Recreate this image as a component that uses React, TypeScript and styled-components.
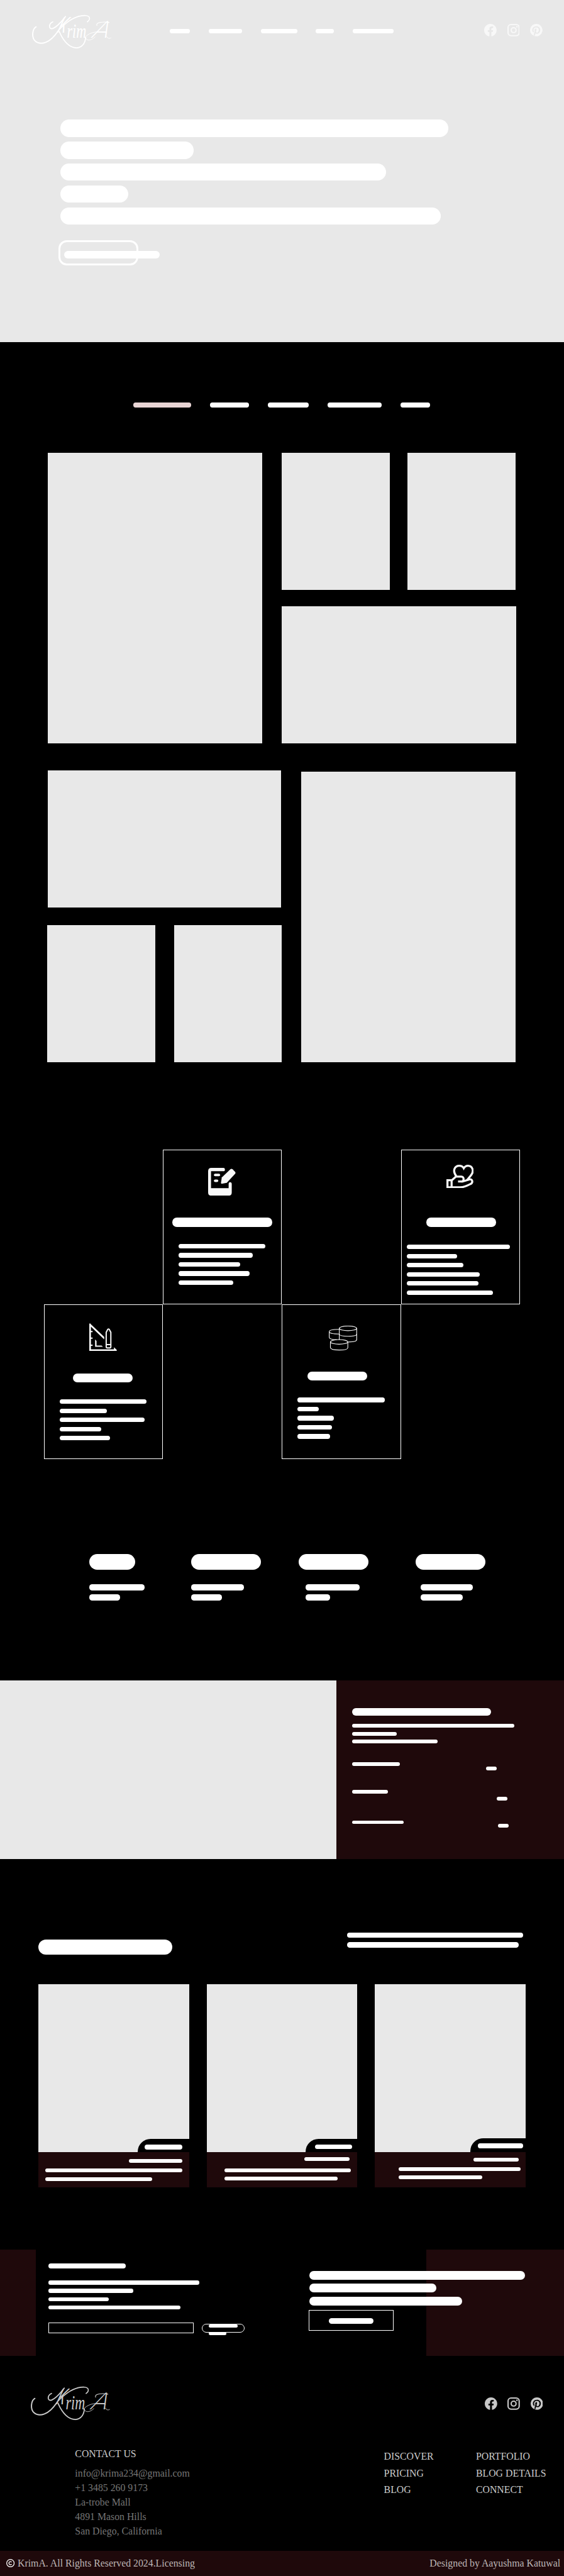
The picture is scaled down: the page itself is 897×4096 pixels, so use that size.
import React from "react";
import styled, { createGlobalStyle } from "styled-components";
import { BsFacebook, BsPinterest } from "react-icons/bs";

/* Design units are based on a 1360 wide artboard. */
const u = (n: number) => `${+(n * 0.6594).toFixed(3)}px`;

const tile = "#e8e8e8";
const maroon = "#1f090b";

const GlobalStyle = createGlobalStyle`
  * { box-sizing: border-box; }
  html, body { margin: 0; padding: 0; background: #000; }
  body { font-family: "Liberation Serif", "Times New Roman", serif; overflow-x: hidden; }
`;

const Page = styled.div`
  width: 100%;
  height: ${u(6211.6)};
  overflow: hidden;
  background: #000;
`;

const Bar = styled.div<{ $w: number; $h: number; $mt?: number; $ml?: number; $tone?: string }>`
  flex: none;
  width: ${(p) => u(p.$w)};
  height: ${(p) => u(p.$h)};
  margin-top: ${(p) => u(p.$mt ?? 0)};
  margin-left: ${(p) => u(p.$ml ?? 0)};
  border-radius: ${(p) => u(p.$h / 2)};
  background: ${(p) => p.$tone ?? "#fff"};
`;

const LineStack = styled.div<{ $gap: number; $mt?: number; $ml?: number }>`
  display: flex;
  flex-direction: column;
  gap: ${(p) => u(p.$gap)};
  margin-top: ${(p) => u(p.$mt ?? 0)};
  margin-left: ${(p) => u(p.$ml ?? 0)};
`;

function Lines(p: { widths: number[]; h: number; gap: number; mt?: number; ml?: number }) {
  return (
    <LineStack $gap={p.gap} $mt={p.mt} $ml={p.ml}>
      {p.widths.map((w, i) => (
        <Bar key={i} $w={w} $h={p.h} />
      ))}
    </LineStack>
  );
}

const BarRow = styled.nav<{ $ml: number }>`
  display: flex;
  gap: ${u(45)};
  margin-left: ${(p) => u(p.$ml)};
`;

/* ---------- brand ---------- */

const LogoSvg = styled.svg<{ $tone: string }>`
  display: block;
  flex: none;
  width: ${u(240)};
  height: ${u(110)};
  color: ${(p) => p.$tone};
`;

function Logo({ tone }: { tone: string }) {
  return (
    <LogoSvg $tone={tone} viewBox="0 0 720 330" role="img" aria-label="KrimA">
      <g fill="none" stroke="currentColor" strokeLinecap="round">
        <path strokeWidth="9" d="M79 135C50 152 46 214 73 238C112 272 180 252 236 168" />
        <path strokeWidth="8" d="M200 99C168 114 168 158 202 146C240 130 268 90 292 60" />
        <path strokeWidth="7" d="M238 164C300 96 372 50 438 53C474 56 472 84 450 99" />
        <path strokeWidth="8" d="M246 168C276 236 318 288 374 287C414 284 436 250 437 212" />
        <path strokeWidth="5" d="M519 126C508 100 570 96 608 104" />
        <path strokeWidth="4" d="M590 178C540 160 470 172 438 205C436 240 478 238 506 208" />
        <path strokeWidth="4" d="M590 205C598 222 612 220 620 215" />
      </g>
      <g fill="currentColor">
        <text
          transform="translate(226 176) skewX(-20)"
          fontFamily="Inter"
          fontStyle="italic"
          fontWeight="400"
          fontSize="156"
          textLength="62"
          lengthAdjust="spacingAndGlyphs"
        >
          K
        </text>
        <text
          x="302"
          y="212"
          fontFamily="Liberation Serif"
          fontStyle="italic"
          fontSize="142"
          textLength="140"
          lengthAdjust="spacingAndGlyphs"
        >
          rim
        </text>
        <text
          transform="translate(478 216) skewX(-20)"
          fontFamily="Inter"
          fontStyle="italic"
          fontWeight="200"
          fontSize="166"
          textLength="122"
          lengthAdjust="spacingAndGlyphs"
        >
          A
        </text>
      </g>
    </LogoSvg>
  );
}

const SocialRow = styled.div<{ $tone: string; $mt?: number; $mb?: number }>`
  display: flex;
  gap: ${u(25)};
  margin-left: auto;
  margin-top: ${(p) => u(p.$mt ?? 0)};
  margin-bottom: ${(p) => u(p.$mb ?? 0)};
  color: ${(p) => p.$tone};
  svg { display: block; width: ${u(30)}; height: ${u(30)}; }
`;

function InstagramIcon() {
  return (
    <svg viewBox="0 0 30 30" fill="none" stroke="currentColor" strokeWidth="3.2">
      <rect x="1.6" y="1.6" width="26.8" height="26.8" rx="7" />
      <circle cx="15" cy="15" r="5.9" />
      <circle cx="23" cy="7" r="2" fill="currentColor" stroke="none" />
    </svg>
  );
}

function SocialIcons() {
  return (
    <>
      <BsFacebook />
      <InstagramIcon />
      <BsPinterest />
    </>
  );
}

/* ---------- hero ---------- */

const Hero = styled.section`
  height: ${u(825.5)};
  background: ${tile};
`;

const Header = styled.header<{ $top: number; $left: number; $right: number }>`
  display: flex;
  align-items: center;
  padding: ${(p) => `${u(p.$top)} ${u(p.$right)} 0 ${u(p.$left)}`};
`;

const HeroButton = styled.div`
  display: flex;
  align-items: center;
  width: ${u(192)};
  height: ${u(60)};
  margin: ${u(38)} 0 0 ${u(141)};
  padding: ${u(8)} 0 0 ${u(9)};
  border: 3px solid #fff;
  border-radius: ${u(20)};
`;

/* ---------- gallery ---------- */

const Portfolio = styled.section`
  padding-top: ${u(145.5)};
`;

const Mosaic = styled.div<{ $gap: number; $mt: number; $ml: number }>`
  display: flex;
  gap: ${(p) => u(p.$gap)};
  margin: ${(p) => `${u(p.$mt)} 0 0 ${u(p.$ml)}`};
`;

const MosaicColumn = styled.div<{ $gap: number }>`
  display: flex;
  flex-direction: column;
  flex: none;
  gap: ${(p) => u(p.$gap)};
`;

const MosaicRow = styled.div<{ $gap: number }>`
  display: flex;
  gap: ${(p) => u(p.$gap)};
`;

const Tile = styled.div<{ $w: number; $h: number; $mt?: number; $ml?: number }>`
  flex: none;
  width: ${(p) => u(p.$w)};
  height: ${(p) => u(p.$h)};
  margin-top: ${(p) => u(p.$mt ?? 0)};
  margin-left: ${(p) => u(p.$ml ?? 0)};
  background: ${tile};
`;

/* ---------- services ---------- */

const ServiceGrid = styled.section`
  display: grid;
  grid-template-columns: repeat(4, ${u(287)});
  grid-template-rows: repeat(2, ${u(373)});
  margin: ${u(212)} 0 0 ${u(106)};
`;

const ServiceCard = styled.article<{ $col: number; $row: number }>`
  grid-column: ${(p) => p.$col};
  grid-row: ${(p) => p.$row};
  border: ${u(2)} solid #fff;
`;

const ServiceIcon = styled.svg<{ $w: number; $h: number; $top: number; $left: number; $below: number }>`
  display: block;
  width: ${(p) => u(p.$w)};
  height: ${(p) => u(p.$h)};
  margin: ${(p) => `${u(p.$top)} 0 ${u(p.$below)} ${u(p.$left)}`};
  color: #f8f8f8;
`;

/* ---------- stats ---------- */

const Stats = styled.section`
  display: grid;
  grid-template-columns: ${u(245)} ${u(259)} ${u(283)} 1fr;
  margin-top: ${u(228)};
  padding-left: ${u(216)};
`;

/* ---------- feature ---------- */

const Feature = styled.section`
  display: flex;
  height: ${u(430.5)};
  margin-top: ${u(193.5)};
`;

const FeatureImage = styled.div`
  flex: none;
  width: ${u(812)};
  background: ${tile};
`;

const FeaturePanel = styled.div`
  flex: 1;
  padding: ${u(67)} 0 0 ${u(38)};
  background: ${maroon};
`;

const FeatureRow = styled.div<{ $h: number }>`
  display: flex;
  align-items: flex-start;
  height: ${(p) => u(p.$h)};
`;

const FeatureRows = styled.div`
  margin-top: ${u(44.5)};
`;

/* ---------- projects ---------- */

const Projects = styled.section`
  padding: ${u(177)} 0 0 ${u(93)};
`;

const ProjectsHead = styled.div`
  display: flex;
  height: ${u(54)};
  margin-bottom: ${u(71)};
`;

const ProjectList = styled.div`
  display: flex;
  gap: ${u(42)};
`;

const ProjectCard = styled.article`
  width: ${u(363.5)};
  height: ${u(490)};
  background: ${maroon};
`;

const ProjectImage = styled.div`
  display: flex;
  align-items: flex-end;
  justify-content: flex-end;
  height: ${u(405)};
  background: ${tile};
`;

const ProjectTab = styled.div<{ $w: number; $h: number }>`
  width: ${(p) => u(p.$w)};
  height: ${(p) => u(p.$h)};
  border-top-left-radius: ${u(31)};
  background: #000;
  display: flex;
`;

/* ---------- newsletter + call to action ---------- */

const Outreach = styled.section`
  display: flex;
  height: ${u(257)};
  margin-top: ${u(149.5)};
  background: linear-gradient(
    to right,
    ${maroon} ${u(86.7)},
    #000 ${u(86.7)},
    #000 ${u(1028)},
    ${maroon} ${u(1028)}
  );
`;

const Newsletter = styled.div`
  flex: none;
  width: ${u(745)};
  padding: ${u(33)} 0 0 ${u(117)};
`;

const Form = styled.div`
  display: flex;
  gap: ${u(20)};
  margin-top: ${u(31)};
`;

const EmailInput = styled.div`
  width: ${u(350)};
  height: ${u(26)};
  border: 1px solid #fff;
`;

const SubmitButton = styled.div`
  width: ${u(103)};
  height: ${u(21)};
  margin-top: ${u(3)};
  padding-left: ${u(14.5)};
  border: 1px solid #fff;
  border-radius: ${u(11)};
`;

const CallToAction = styled.div`
  padding-top: ${u(52)};
`;

const OutlineButton = styled.div`
  display: flex;
  justify-content: center;
  width: ${u(204)};
  height: ${u(49)};
  margin-top: ${u(11.5)};
  padding-top: ${u(17.5)};
  border: ${u(2)} solid #fff;
`;

/* ---------- footer ---------- */

const FooterColumns = styled.div`
  display: flex;
  height: ${u(302.5)};
  padding-top: ${u(50.5)};
  padding-left: ${u(181)};
  font-size: ${u(24)};
  white-space: nowrap;
`;

const Contact = styled.div`
  width: ${u(745)};
  line-height: ${u(35)};
  color: #757575;
`;

const ContactTitle = styled.div`
  margin-bottom: ${u(11.6)};
  color: #ccc;
`;

const LinkColumn = styled.div<{ $w: number }>`
  width: ${(p) => u(p.$w)};
  padding-top: ${u(5)};
  line-height: ${u(40)};
  color: #ccc;
`;

const BottomBar = styled.div`
  display: flex;
  align-items: center;
  height: ${u(60)};
  padding: 0 ${u(9)} 0 ${u(15)};
  background: ${maroon};
  color: #bdb6b6;
  font-size: ${u(24)};
  line-height: ${u(60)};
  white-space: nowrap;
`;

const CopyrightIcon = styled.svg`
  display: block;
  width: ${u(20)};
  height: ${u(20)};
  margin-right: ${u(7.5)};
  color: #fff;
`;

const Credit = styled.span`
  margin-left: auto;
`;

export default function App() {
  return (
    <Page>
      <GlobalStyle />
      <Hero>
        <Header $top={20} $left={60} $right={52}>
          <Logo tone="#fff" />
          <BarRow $ml={110}>
            {[48, 81, 88, 44, 99].map((w, i) => (
              <Bar key={i} $w={w} $h={9.5} />
            ))}
          </BarRow>
          <SocialRow $tone="#f8f8f8" $mb={4}>
            <SocialIcons />
          </SocialRow>
        </Header>
        <Lines widths={[936, 322, 786, 164, 918]} h={42} gap={11} mt={158} ml={145} />
        <HeroButton>
          <Bar $w={230} $h={18} />
        </HeroButton>
      </Hero>

      <Portfolio>
        <BarRow $ml={322}>
          <Bar $w={139.5} $h={11} $tone="#e8d4d4" />
          <Bar $w={94.5} $h={11} />
          <Bar $w={99} $h={11} />
          <Bar $w={131} $h={11} />
          <Bar $w={72} $h={11} />
        </BarRow>
        <Mosaic $gap={48} $mt={110} $ml={116}>
          <Tile $w={516} $h={700} />
          <MosaicColumn $gap={40}>
            <MosaicRow $gap={43}>
              <Tile $w={260} $h={330} />
              <Tile $w={260} $h={330} />
            </MosaicRow>
            <Tile $w={565} $h={330} />
          </MosaicColumn>
        </Mosaic>
        <Mosaic $gap={47} $mt={66} $ml={114}>
          <MosaicColumn $gap={43}>
            <Tile $w={562} $h={330} $ml={2} />
            <MosaicRow $gap={46}>
              <Tile $w={260} $h={330} />
              <Tile $w={260} $h={330} />
            </MosaicRow>
          </MosaicColumn>
          <Tile $w={516} $h={700} $mt={3} />
        </Mosaic>
      </Portfolio>

      <ServiceGrid>
        <ServiceCard $col={1} $row={2}>
          <ServiceIcon $w={66} $h={67} $top={43} $left={108} $below={54} viewBox="0 0 66 67">
            <g fill="currentColor">
              <path d="M0 1.5Q1.5-1 4 2.5L36 33V39L4 8.500V63H62Q66 63 66 67H0Z" />
              <path d="M3 18.500H8V21.500H3ZM3 34.500H8V37.500H3ZM3 51.500H8V54.500H3Z" />
              <path d="M14 39L17.500 43V54H29.500L33 57H14ZM59.500 58L66 64V67H59.500Z" />
            </g>
            <path
              d="M40.800 22L44.500 15Q46.300 13 48.200 15L52 22V57Q52 59.500 49.500 59.500H43.300Q40.800 59.500 40.800 57ZM40.800 51.500H52"
              fill="none"
              stroke="currentColor"
              strokeWidth="3"
            />
          </ServiceIcon>
          <Bar $w={144} $h={22} $ml={68} />
          <Lines widths={[210, 115, 205, 100, 122]} h={11} gap={11} mt={41} ml={36} />
        </ServiceCard>

        <ServiceCard $col={2} $row={1}>
          <ServiceIcon $w={66} $h={67} $top={41} $left={108} $below={54} viewBox="0 0 66 67">
            <g fill="currentColor">
              <path d="M8 0H37Q40.500 0 40.500 4Q40.500 8 37 8H7V49H49.500V39Q49.500 34.500 53 34.500Q57 34.500 57 39V59Q57 67 49 67H8Q0 67 0 59V8Q0 0 8 0Z" />
              <rect x="14" y="14" width="15" height="6" rx="3" />
              <rect x="14" y="28" width="10.500" height="6" rx="3" />
              <path d="M33 23L54 3Q56.500 1 59 3.500L65 9.500Q67 12 65 14.500L45 36L33 38.200Q31 38.500 31 36Z" />
            </g>
          </ServiceIcon>
          <Bar $w={240.500} $h={22} $ml={21} />
          <Lines widths={[210, 178.5, 149, 171, 132]} h={11} gap={11} mt={41} ml={36} />
        </ServiceCard>

        <ServiceCard $col={3} $row={2}>
          <ServiceIcon $w={69} $h={60} $top={50} $left={111.5} $below={50} viewBox="0 0 69 60">
            <g fill="none" stroke="currentColor" strokeWidth="1.7">
              <ellipse cx="46.200" cy="6.300" rx="21" ry="5.600" />
              <path d="M25.200 6.300V34M67.200 6.300V33.500C67.200 37 59 39.200 47 39.200" />
              <path d="M25.200 20.500C26 27 67 27 67.200 20.500" />
              <path d="M25 8.800C9 8.800 1 11 1 14.500C1 18 9 20 25 20M1 14.500V28C1 31 8 33.500 19 33.800" />
              <ellipse cx="24.800" cy="39" rx="21" ry="5.600" />
              <path d="M3.800 39V53C5 60.500 45 60.500 45.800 53V39" />
            </g>
          </ServiceIcon>
          <Bar $w={144.500} $h={22} $ml={59.5} />
          <Lines widths={[210, 51, 88, 83, 78]} h={11} gap={11} mt={41} ml={36} />
        </ServiceCard>

        <ServiceCard $col={4} $row={1}>
          <ServiceIcon $w={66} $h={57} $top={34} $left={108} $below={71} viewBox="0 0 66 57">
            <g fill="none" stroke="currentColor" strokeWidth="5">
              <path d="M24 28C13 13 21 2.500 31 2.500C37 2.500 40 5 41.800 8.500C44 5 47 2.500 52 2.500C62 2.500 69 15 58 27L50 37" />
              <path d="M2.500 37.500H12.500V54.500H2.500Z" />
              <path d="M12.500 38L23 28.500H36C43 28.500 43.500 40.500 36 40.500H28" />
              <path d="M36 40.500H39L55 35.500C63 33.500 65 43 58 46.500C49 51.500 40 54.500 33 54.500H12.500" />
            </g>
          </ServiceIcon>
          <Bar $w={168} $h={22} $ml={60.5} />
          <Lines widths={[249, 121, 136, 175, 172, 207]} h={11} gap={11} mt={43} ml={13} />
        </ServiceCard>
      </ServiceGrid>

      <Stats>
        {[
          { w: 110, l: [133, 74], ml: 0 },
          { w: 168, l: [127, 75], ml: 0 },
          { w: 168, l: [131, 59], ml: 17 },
          { w: 168, l: [125, 100.5], ml: 12 },
        ].map((s, i) => (
          <div key={i}>
            <Bar $w={s.w} $h={39} />
            <Lines widths={s.l} h={14} gap={10} mt={35} ml={s.ml} />
          </div>
        ))}
      </Stats>

      <Feature>
        <FeatureImage />
        <FeaturePanel>
          <Bar $w={335} $h={18} />
          <Lines widths={[390, 107, 205]} h={9} gap={10} mt={20} />
          <FeatureRows>
            <FeatureRow $h={68}>
              <Bar $w={114} $h={9} />
              <Bar $w={26} $h={9} $ml={208} $mt={11} />
            </FeatureRow>
            <FeatureRow $h={73}>
              <Bar $w={86} $h={9} />
              <Bar $w={26} $h={9} $ml={262} $mt={16} />
            </FeatureRow>
            <FeatureRow $h={20}>
              <Bar $w={124} $h={9} />
              <Bar $w={26} $h={9} $ml={227} $mt={8} />
            </FeatureRow>
          </FeatureRows>
        </FeaturePanel>
      </Feature>

      <Projects>
        <ProjectsHead>
          <Bar $w={322} $h={37} $mt={17} />
          <Lines widths={[425, 414.5]} h={13} gap={11} ml={422} />
        </ProjectsHead>
        <ProjectList>
          <ProjectCard>
            <ProjectImage>
              <ProjectTab $w={124} $h={32}>
                <Bar $w={91} $h={12} $mt={13} $ml={16.5} />
              </ProjectTab>
            </ProjectImage>
            <Bar $w={128} $h={9} $mt={17} $ml={218.5} />
            <Bar $w={330} $h={9} $mt={14} $ml={16.5} />
            <Bar $w={257.5} $h={9} $mt={11} $ml={16.5} />
          </ProjectCard>
          <ProjectCard>
            <ProjectImage>
              <ProjectTab $w={124.5} $h={32}>
                <Bar $w={90} $h={11} $mt={13} $ml={22} />
              </ProjectTab>
            </ProjectImage>
            <Bar $w={109.5} $h={9} $mt={12} $ml={235} />
            <Bar $w={304.5} $h={9} $mt={18} $ml={43.5} />
            <Bar $w={273} $h={9} $mt={11} $ml={43.5} />
          </ProjectCard>
          <ProjectCard>
            <ProjectImage>
              <ProjectTab $w={133.5} $h={33.5}>
                <Bar $w={109} $h={11} $mt={12.5} $ml={19} />
              </ProjectTab>
            </ProjectImage>
            <Bar $w={109} $h={9} $mt={13.5} $ml={238.5} />
            <Bar $w={294} $h={9} $mt={14} $ml={57.5} />
            <Bar $w={201} $h={9} $mt={11} $ml={57.5} />
          </ProjectCard>
        </ProjectList>
      </Projects>

      <Outreach>
        <Newsletter>
          <Bar $w={186.5} $h={13.5} />
          <Lines widths={[364, 204, 145, 319]} h={10} gap={10} mt={28.5} />
          <Form>
            <EmailInput />
            <SubmitButton>
              <Bar $w={71} $h={8} />
              <Bar $w={43} $h={8} $mt={10} />
            </SubmitButton>
          </Form>
        </Newsletter>
        <CallToAction>
          <Lines widths={[519.5, 306, 368.5]} h={21} gap={10} ml={1.7} />
          <OutlineButton>
            <Bar $w={108} $h={14} />
          </OutlineButton>
        </CallToAction>
      </Outreach>

      <footer>
        <Header $top={57.5} $left={57.5} $right={51}>
          <Logo tone="#ccc" />
          <SocialRow $tone="#c8c8c8" $mt={4}>
            <SocialIcons />
          </SocialRow>
        </Header>
        <FooterColumns>
          <Contact>
            <ContactTitle>CONTACT US</ContactTitle>
            <div>info@krima234@gmail.com</div>
            <div>+1 3485 260 9173</div>
            <div>La-trobe Mall</div>
            <div>4891 Mason Hills</div>
            <div>San Diego, California</div>
          </Contact>
          <LinkColumn $w={222}>
            <div>DISCOVER</div>
            <div>PRICING</div>
            <div>BLOG</div>
          </LinkColumn>
          <LinkColumn $w={200}>
            <div>PORTFOLIO</div>
            <div>BLOG DETAILS</div>
            <div>CONNECT</div>
          </LinkColumn>
        </FooterColumns>
        <BottomBar>
          <CopyrightIcon viewBox="0 0 20 20" fill="none" stroke="currentColor" strokeWidth="2">
            <circle cx="10" cy="10" r="9" />
            <path d="M13 7.800A3.700 3.700 0 1 0 13 12.200" />
          </CopyrightIcon>
          <span>KrimA. All Rights Reserved 2024.Licensing</span>
          <Credit>Designed by Aayushma Katuwal</Credit>
        </BottomBar>
      </footer>
    </Page>
  );
}
